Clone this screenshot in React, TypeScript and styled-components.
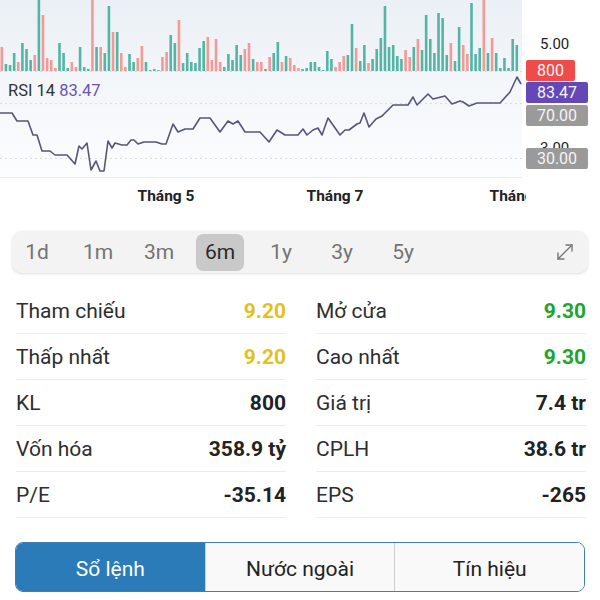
import styled, { createGlobalStyle } from "styled-components"
import { MoveDiagonal } from "lucide-react"

const GlobalStyle = createGlobalStyle`
  body {
    margin: 0;
    background: #ffffff;
    font-family: Roboto, "Noto Sans", Arial, sans-serif;
  }
`

// volume bars, read left to right
const heights = [
  24, 7, 6, 18, 9, 28, 22, 11, 16, 80, 56, 13, 11, 3, 28, 18, 3, 9, 4, 24, 4, 2, 80, 24, 24, 18, 65, 39, 39, 18, 4, 17, 9, 13, 25, 9, 1, 2, 1, 14, 19, 36, 28, 51,
  8, 18, 9, 8, 23, 30, 34, 11, 32, 9, 4, 17, 11, 26, 16, 22, 28, 12, 9, 9, 2, 14, 18, 29, 9, 15, 13, 6, 3, 2, 3, 9, 9, 4, 1, 20, 12, 4,
  9, 15, 16, 47, 23, 10, 26, 8, 12, 22, 33, 65, 24, 26, 15, 12, 21, 14, 24, 32, 21, 56, 32, 18, 58, 53, 16, 28, 10, 44, 26, 17, 68, 17, 23, 80, 18, 33, 18, 3, 13, 3, 32, 26,
]
const sides =
  "rgggrgggrgrrrrgggrrgggrgrggrgrrggrrggggrrggr" +
  "ggggggrrrrgggggrrgrrgrggrgrrrggggggggr" +
  "rrggrggrggggggggrrgrgggggggrggrrgggrgrgggggg"

const rsi: [number, number][] = [
  [0, 113], [12, 113], [17, 121], [28, 121], [33, 135], [37, 135], [42, 151], [50, 151], [55, 155], [67, 155],
  [75, 164], [79, 146], [82, 149], [87, 143], [91, 170], [96, 161], [100, 171], [104, 171], [108, 141], [112, 148],
  [115, 143], [122, 145], [127, 145], [131, 140], [134, 140], [138, 144], [144, 142], [156, 142], [162, 144], [166, 144],
  [173, 124], [178, 132], [185, 129], [193, 129], [200, 118], [210, 118], [220, 132], [228, 121], [233, 124], [238, 121],
  [245, 132], [260, 132], [269, 142], [277, 130], [285, 135], [298, 135], [303, 129], [307, 135], [313, 130], [318, 128],
  [322, 135], [328, 118], [340, 135], [345, 130], [349, 130], [357, 124], [360, 123], [364, 113], [369, 127], [376, 119],
  [382, 116], [393, 105], [408, 105], [413, 97], [417, 105], [428, 94], [433, 99], [445, 96], [452, 104], [460, 101],
  [463, 102], [469, 106], [477, 103], [500, 103], [510, 92], [517, 77], [521, 84],
]

const Page = styled.div`
  width: 600px;
  height: 600px;
  overflow: hidden;
  color: #222;
`

const Chart = styled.div`
  display: grid;
  grid-template-columns: 522px 78px;
  height: 178px;
`

const Plot = styled.div`
  position: relative;
  background: linear-gradient(#ebf0f6, #fcfdfe);
  svg {
    display: block;
  }
`

const RsiLabel = styled.div`
  position: absolute;
  left: 8px;
  top: 81px;
  font-size: 16.5px;
  color: #333;
  span {
    color: #6a55b0;
  }
`

const Axis = styled.div`
  position: relative;
`

const AxisText = styled.div<{ $top: number }>`
  position: absolute;
  left: 18px;
  top: ${(p) => p.$top}px;
  font-size: 15px;
  line-height: 16px;
  color: #222;
`

const Tag = styled.div<{ $top: number; $bg: string; $w: number }>`
  position: absolute;
  left: 4px;
  top: ${(p) => p.$top}px;
  width: ${(p) => p.$w}px;
  height: 21px;
  border-radius: 2px;
  background: ${(p) => p.$bg};
  color: #f4f4f4;
  font-size: 16px;
  line-height: 21px;
  text-align: center;
`

const TimeAxis = styled.div`
  position: relative;
  width: 526px;
  height: 40px;
  overflow: hidden;
`

const TimeLabel = styled.div<{ $center: number }>`
  position: absolute;
  top: 9px;
  left: ${(p) => p.$center - 40}px;
  width: 80px;
  text-align: center;
  font-size: 15.5px;
  font-weight: 700;
  color: #222;
`

const PeriodBar = styled.div`
  display: flex;
  align-items: center;
  gap: 13px;
  height: 42px;
  margin: 13px 12px 0;
  padding: 0 1px;
  border-radius: 10px;
  background: #f3f3f3;
  box-shadow: 0 1px 3px rgba(0, 0, 0, 0.14);
`

const Period = styled.div<{ $active?: boolean }>`
  width: 48px;
  height: 37px;
  border-radius: 7px;
  display: flex;
  align-items: center;
  justify-content: center;
  font-size: 21px;
  color: ${(p) => (p.$active ? "#2a2a2a" : "#747474")};
  background: ${(p) => (p.$active ? "#c9c9c9" : "transparent")};
`

const Expand = styled.div`
  margin-left: auto;
  margin-right: 10px;
  display: flex;
  color: #777;
`

const Stats = styled.div`
  display: grid;
  grid-template-columns: 1fr 1fr;
  column-gap: 30px;
  padding: 15px 14px 0 16px;
`

const Row = styled.div`
  display: flex;
  align-items: center;
  justify-content: space-between;
  height: 45px;
  border-bottom: 1px solid #ececec;
`

const Label = styled.span`
  font-size: 21px;
  color: #2e2e2e;
`

const Value = styled.span<{ $tone?: "ref" | "up" }>`
  font-size: 21px;
  font-weight: 700;
  color: ${(p) => (p.$tone === "ref" ? "#e2c11e" : p.$tone === "up" ? "#1ea52a" : "#222")};
`

const Tabs = styled.div`
  display: flex;
  height: 48px;
  margin: 24px 15px 0;
  border: 1.5px solid #3f7eae;
  border-radius: 8px;
  overflow: hidden;
`

const Tab = styled.div<{ $active?: boolean }>`
  flex: 1;
  display: flex;
  align-items: center;
  justify-content: center;
  padding-top: 3px;
  font-size: 21px;
  color: ${(p) => (p.$active ? "#ffffff" : "#222")};
  background: ${(p) => (p.$active ? "#2a7bb8" : "#f9f9f9")};
  & + & {
    border-left: 1px solid #cfcfcf;
  }
`

const left = [
  { label: "Tham chiếu", value: "9.20", tone: "ref" as const },
  { label: "Thấp nhất", value: "9.20", tone: "ref" as const },
  { label: "KL", value: "800" },
  { label: "Vốn hóa", value: "358.9 tỷ" },
  { label: "P/E", value: "-35.14" },
]
const right = [
  { label: "Mở cửa", value: "9.30", tone: "up" as const },
  { label: "Cao nhất", value: "9.30", tone: "up" as const },
  { label: "Giá trị", value: "7.4 tr" },
  { label: "CPLH", value: "38.6 tr" },
  { label: "EPS", value: "-265" },
]

type Stat = { label: string; value: string; tone?: "ref" | "up" }

const StatColumn = ({ items }: { items: Stat[] }) => (
  <div>
    {items.map((s) => (
      <Row key={s.label}>
        <Label>{s.label}</Label>
        <Value $tone={s.tone}>{s.value}</Value>
      </Row>
    ))}
  </div>
)

export default function App() {
  return (
    <Page>
      <GlobalStyle />
      <Chart>
        <Plot>
          <svg width={522} height={178}>
            <line x1={0} x2={522} y1={71.5} y2={71.5} stroke="#d6dbe1" strokeDasharray="2 3" />
            {heights.map((h, i) => (
              <rect
                key={i}
                x={i * 4.12 + 0.5}
                y={71 - h}
                width={2.6}
                height={h}
                fill={sides[i] === "r" ? "#f19a96" : "#54b5a5"}
              />
            ))}
            <line x1={0} x2={522} y1={103.5} y2={103.5} stroke="#d9dde2" strokeDasharray="2 3" />
            <line x1={0} x2={522} y1={158.5} y2={158.5} stroke="#d9dde2" strokeDasharray="2 3" />
            <polyline
              points={rsi.map((p) => p.join(",")).join(" ")}
              fill="none"
              stroke="#55557f"
              strokeWidth={1.6}
              strokeLinejoin="round"
            />
            <line x1={0} x2={522} y1={177.5} y2={177.5} stroke="#ebebeb" />
          </svg>
          <RsiLabel>
            RSI 14 <span>83.47</span>
          </RsiLabel>
        </Plot>
        <Axis>
          <AxisText $top={36}>5.00</AxisText>
          <Tag $top={60} $bg="#f04b4b" $w={49}>800</Tag>
          <AxisText $top={140}>3.00</AxisText>
          <Tag $top={82} $bg="#6548b8" $w={62}>83.47</Tag>
          <Tag $top={105} $bg="#9a9a9a" $w={62}>70.00</Tag>
          <Tag $top={148} $bg="#9a9a9a" $w={62}>30.00</Tag>
        </Axis>
      </Chart>
      <TimeAxis>
        <TimeLabel $center={166}>Tháng 5</TimeLabel>
        <TimeLabel $center={335}>Tháng 7</TimeLabel>
        <TimeLabel $center={518}>Tháng 9</TimeLabel>
      </TimeAxis>
      <PeriodBar>
        {["1d", "1m", "3m", "6m", "1y", "3y", "5y"].map((p) => (
          <Period key={p} $active={p === "6m"}>
            {p}
          </Period>
        ))}
        <Expand>
          <MoveDiagonal size={24} strokeWidth={1.4} />
        </Expand>
      </PeriodBar>
      <Stats>
        <StatColumn items={left} />
        <StatColumn items={right} />
      </Stats>
      <Tabs>
        <Tab $active>Sổ lệnh</Tab>
        <Tab>Nước ngoài</Tab>
        <Tab>Tín hiệu</Tab>
      </Tabs>
    </Page>
  )
}
